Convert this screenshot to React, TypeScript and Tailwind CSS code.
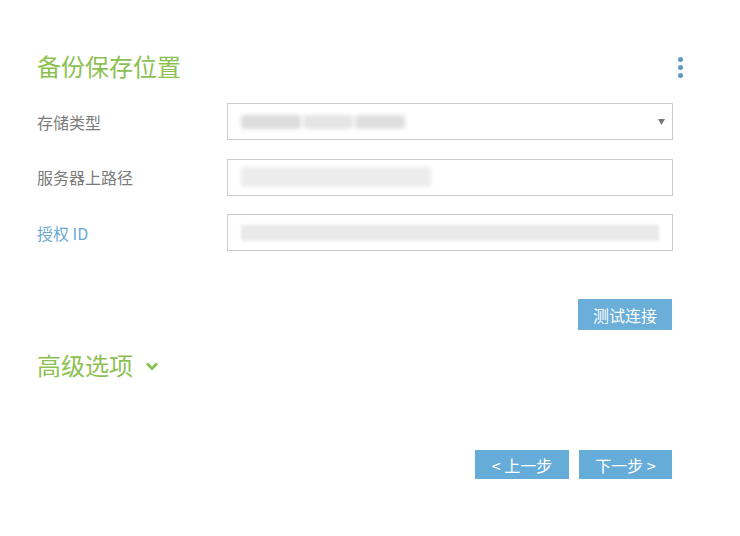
import React from 'react';

const font = { fontFamily: '"Microsoft YaHei", "Noto Sans CJK SC", "Noto Sans", sans-serif' };

const Blur: React.FC<{ w: string; tone?: string }> = ({ w, tone = 'bg-[#e6e6e6]' }) => (
  <div className={`h-[14px] ${w} ${tone} blur-[2px] rounded-sm`} />
);

const Row: React.FC<{ label: string; blue?: boolean; children: React.ReactNode }> = ({ label, blue, children }) => (
  <div className="flex items-center h-[37px]">
    <div className={`w-[190px] text-[16px] ${blue ? 'text-[#6aa9d2]' : 'text-[#7b7b7b]'}`}>{label}</div>
    <div className="flex-1 h-[37px] border border-[#cccccc] bg-white flex items-center px-[13px] relative">
      {children}
    </div>
  </div>
);

export default function App() {
  return (
    <div className="w-[740px] h-[536px] bg-white relative" style={font}>
      <div className="pl-[37px] pt-[49px] w-[673px]">
        <div className="flex items-center justify-between h-[34px]">
          <h1 className="text-[24px] leading-[34px] text-[#8cc152]">备份保存位置</h1>
        </div>

        <div className="mt-[20px] flex flex-col gap-[18.5px]">
          <Row label="存储类型">
            <div className="flex gap-[2px] items-center">
              <Blur w="w-[60px]" tone="bg-[#dcdcdc]" />
              <Blur w="w-[50px]" tone="bg-[#e4e4e4]" />
              <Blur w="w-[50px]" tone="bg-[#dedede]" />
            </div>
            <svg className="absolute right-[7px] top-[15px]" width="7" height="6" viewBox="0 0 7 6">
              <path d="M0 0 H7 L3.5 6 Z" fill="#777" />
            </svg>
          </Row>
          <Row label="服务器上路径">
            <div className="flex gap-[2px] items-center h-[20px]">
              <div className="h-[20px] w-[190px] bg-[#ececec] blur-[2px]" />
            </div>
          </Row>
          <Row label="授权 ID" blue>
            <div className="flex items-center w-full">
              <div className="h-[16px] w-full bg-[#e9e9e9] blur-[1.5px]" />
            </div>
          </Row>
        </div>

        <div className="flex justify-end mt-[48px] mr-[1px]">
          <button className="w-[94px] h-[31px] bg-[#6aaed9] text-white text-[16px]">测试连接</button>
        </div>

        <div className="flex items-center mt-[18px] h-[34px]">
          <span className="text-[24px] leading-[34px] text-[#8cc152]">高级选项</span>
          <svg className="ml-[12px] mt-[2px]" width="14" height="10" viewBox="0 0 14 10">
            <path d="M2 2.5 L7 7.5 L12 2.5" stroke="#8cc152" strokeWidth="2.8" fill="none" />
          </svg>
        </div>

        <div className="flex justify-end gap-[10px] mt-[68px] mr-[1px]">
          <button className="w-[94px] h-[29px] bg-[#66acd8] text-white text-[16px]">&lt; 上一步</button>
          <button className="w-[93px] h-[29px] bg-[#66acd8] text-white text-[16px]">下一步 &gt;</button>
        </div>
      </div>

      <div className="absolute left-[678px] top-[57px] flex flex-col gap-[3px]">
        <div className="w-[5px] h-[5px] rounded-full bg-[#5b9bc4]" />
        <div className="w-[5px] h-[5px] rounded-full bg-[#5b9bc4]" />
        <div className="w-[5px] h-[5px] rounded-full bg-[#5b9bc4]" />
      </div>
    </div>
  );
}
